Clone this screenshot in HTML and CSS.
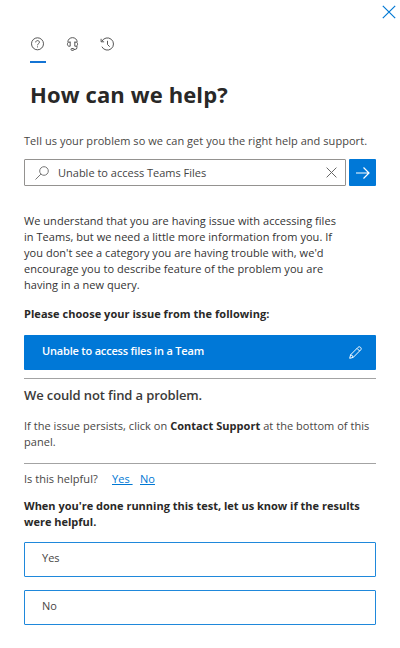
FILE: index.html
```html
<!DOCTYPE html>
<html lang="en">
<head>
  <meta charset="UTF-8">
  <meta name="viewport" content="width=device-width, initial-scale=1.0">
  <title>How can we help?</title>
  <link rel="stylesheet" href="styles.css">
</head>
<body>
  <div class="panel">
    <div class="panel-top">
      <button class="icon-btn" aria-label="Close">
        <svg class="close-icon" width="14" height="14" viewBox="0 0 14 14"><path d="M.8.8l12.4 12.4M13.2.8L.8 13.2"/></svg>
      </button>
    </div>

    <nav class="tabs">
      <button class="tab active" aria-label="Help">
        <svg width="14" height="14" viewBox="0 0 14 14"><circle cx="6.5" cy="6.8" r="6"/><path d="M4.700 5.400c0-2.400 3.700-2.400 3.700-.1C8.400 6.700 6.500 6.700 6.500 8.300M6.500 9.400v1"/></svg>
      </button>
      <button class="tab" aria-label="Contact support">
        <svg width="14" height="14" viewBox="0 0 14 14"><path d="M1.800 5.300C1.800-.9 11.200-.9 11.200 5.300M4.200 4.600v4.600H3C.9 9.200.9 5.200 3 5.200h1.200M8.800 4.600v4.600H10c2.100 0 2.100-4 0-4H8.800M10.900 9v1.700q0 1.700-1.700 1.700H8"/><rect x="5" y="11.500" width="3" height="1.800" rx=".8"/></svg>
      </button>
      <button class="tab" aria-label="History">
        <svg width="15" height="14" viewBox="0 0 15 14"><path d="M1.900 4.300a6.100 6.100 0 1 1 0 5.400M1.100 1.800v3h3M7.500 3.800V7.500l2.200 2.200"/></svg>
      </button>
    </nav>

    <h1>How can we help?</h1>
    <p class="intro">Tell us your problem so we can get you the right help and support.</p>

    <div class="search">
      <div class="search-box">
        <svg class="search-icon" width="14" height="14" viewBox="0 0 14 14"><circle cx="9" cy="5" r="4.300"/><path d="M5.900 8.100L.5 13.500"/></svg>
        <span class="search-text">Unable to access Teams Files</span>
        <svg class="clear-icon" width="11" height="11" viewBox="0 0 11 11"><path d="M.6.6l9.800 9.800M10.400.6L.6 10.400"/></svg>
      </div>
      <button class="go-btn" aria-label="Search">
        <svg width="14" height="12" viewBox="0 0 14 12"><path d="M0 6h13M7.500.5L13 6l-5.500 5.500"/></svg>
      </button>
    </div>

    <p class="message">
      We understand that you are having issue with accessing files<br>
      in Teams, but we need a little more information from you. If<br>
      you don't see a category you are having trouble with, we'd<br>
      encourage you to describe feature of the problem you are<br>
      having in a new query.
    </p>
    <p class="choose">Please choose your issue from the following:</p>

    <button class="selected">
      <span>Unable to access files in a Team</span>
      <svg width="13" height="13" viewBox="0 0 13 13"><path d="M.7 12.300l.9-3.500 7.500-7.500c1.600-1.600 4.200 1 2.600 2.600l-7.500 7.500zM8 2.400L10.600 5M1.600 8.800q2.300.3 2.600 2.600"/></svg>
    </button>

    <section class="result">
      <h2>We could not find a problem.</h2>
      <p>If the issue persists, click on <strong>Contact Support</strong> at the bottom of this<br>panel.</p>
    </section>

    <div class="helpful">
      <span class="helpful-label">Is this helpful?</span>
      <a class="link-yes" href="#">Yes&nbsp;</a>
      <a href="#">No</a>
    </div>

    <p class="feedback">When you're done running this test, let us know if the results<br>were helpful.</p>
    <button class="option">Yes</button>
    <button class="option">No</button>
  </div>
</body>
</html>
```
FILE: styles.css
```css
* {
  box-sizing: border-box;
}

body {
  margin: 0;
  background: #fff;
  color: #333;
  font-family: "Open Sans", "Segoe UI", sans-serif;
  font-size: 11px;
  line-height: 16px;
  letter-spacing: 0.04px;
}

h1, h2, p {
  margin: 0;
  white-space: nowrap;
}

button {
  border: 0;
  padding: 0;
  background: none;
  color: inherit;
  font: inherit;
  cursor: pointer;
}

svg {
  display: block;
  fill: none;
  stroke: currentColor;
  stroke-width: 1;
  flex-shrink: 0;
}

.panel {
  width: 400px;
  height: 648px;
  padding: 0 24px;
}

.panel-top {
  display: flex;
  justify-content: flex-end;
  height: 37px;
  padding-top: 5px;
  margin-right: -20px;
}

.icon-btn {
  height: 14px;
  color: #0078d4;
}

.close-icon {
  stroke-width: 1.2;
}

.tabs {
  display: flex;
  gap: 20px;
  padding-left: 6px;
  height: 26px;
}

.tab {
  display: flex;
  justify-content: center;
  width: 15px;
  height: 26px;
  color: #444;
}

.tab svg {
  stroke-width: .9;
}

.active {
  width: 16px;
  margin-right: -1px;
  border-bottom: 2px solid #1474d4;
}

h1 {
  margin: 16px 0 0 6px;
  font-size: 22px;
  line-height: 31px;
  font-weight: 700;
  letter-spacing: 0.12px;
  color: #292827;
}

.intro {
  margin-top: 23px;
  letter-spacing: 0.05px;
  color: #484644;
}

.search {
  display: flex;
  gap: 3px;
  margin-top: 10px;
}

.search-box {
  display: flex;
  align-items: center;
  flex: 1;
  height: 27px;
  padding: 0 8px 0 10px;
  border: 1px solid #949290;
  border-radius: 1px;
}

.search-icon {
  color: #777;
}

.search-text {
  flex: 1;
  margin-left: 9px;
  white-space: nowrap;
  letter-spacing: 0;
  color: #444;
}

.clear-icon {
  color: #666;
}

.go-btn {
  display: flex;
  align-items: center;
  justify-content: center;
  width: 27px;
  height: 27px;
  border-radius: 1px;
  background: #0078d7;
  color: #fff;
}

.go-btn svg {
  stroke-width: 1.2;
}

.message {
  margin-top: 27px;
}

.choose {
  margin-top: 13px;
  font-weight: 700;
  color: #292827;
}

.selected {
  display: flex;
  align-items: center;
  justify-content: space-between;
  width: 100%;
  height: 35px;
  margin-top: 13px;
  padding: 0 14px 0 18px;
  border-radius: 1px;
  background: #0078d7;
  color: #fff;
  font-weight: 600;
  letter-spacing: -0.19px;
}

.selected span {
  margin-top: -3px;
  white-space: nowrap;
}

.result {
  height: 86px;
  margin-top: 8px;
  border-top: 1px solid #a3a3a3;
  border-bottom: 1px solid #a3a3a3;
  color: #484644;
}

h2 {
  margin-top: 7px;
  font-size: 13px;
  line-height: 18px;
  font-weight: 600;
  letter-spacing: -0.12px;
  color: #3b3a39;
}

.result p {
  margin-top: 14px;
}

.result strong {
  color: #292827;
}

.helpful {
  display: flex;
  margin-top: 7px;
  white-space: nowrap;
  color: #484644;
}

.helpful-label {
  width: 88px;
}

.helpful a {
  color: #0078d4;
}

.link-yes {
  width: 28px;
}

.feedback {
  margin-top: 11px;
  margin-bottom: 12px;
  font-weight: 700;
  letter-spacing: 0;
  color: #292827;
}

.option {
  display: block;
  width: 100%;
  height: 35px;
  margin-bottom: 13px;
  padding: 0 17px 3px;
  border: 1px solid #1f88db;
  border-radius: 1px;
  text-align: left;
  color: #484644;
}
```
